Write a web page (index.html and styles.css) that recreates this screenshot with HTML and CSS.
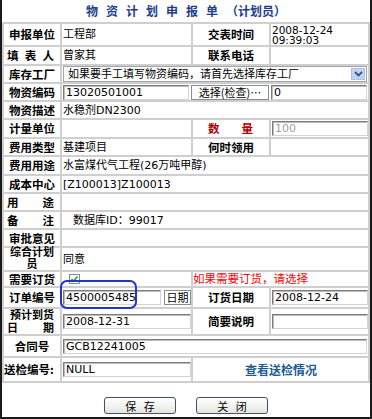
FILE: index.html
```html
<!DOCTYPE html>
<html lang="zh-CN">
<head>
  <meta charset="UTF-8">
  <title>物资计划申报单（计划员）</title>
  <link rel="stylesheet" href="styles.css">
</head>
<body>

<div class="sheet">
  <div class="sheet-title"><span class="title-main">物资计划申报单</span>（计划员）</div>

  <div class="form-grid">
    <!-- 申报单位 -->
    <div class="lbl">申报单位</div>
    <div class="val">工程部</div>
    <div class="lbl">交表时间</div>
    <div class="val stamp">2008-12-24<br>09:39:03</div>

    <!-- 填表人 -->
    <div class="lbl spread"><span>填</span><span>表</span><span>人</span></div>
    <div class="val">曾家其</div>
    <div class="lbl">联系电话</div>
    <div class="val"></div>

    <!-- 库存工厂 -->
    <div class="lbl">库存工厂</div>
    <div class="val span3">
      <div class="select-box">
        <span class="select-text">如果要手工填写物资编码，请首先选择库存工厂</span>
        <span class="select-arrow">
          <svg width="9" height="6" viewBox="0 0 9 6"><path d="M1 1 L4.5 4.5 L8 1" fill="none" stroke="#3d5280" stroke-width="1.8"/></svg>
        </span>
      </div>
    </div>

    <!-- 物资编码 -->
    <div class="lbl">物资编码</div>
    <div class="val span3">
      <input class="text-input w-code" value="13020501001">
      <button class="pick-btn">选择(检查)…</button>
      <input class="text-input w-side" value="0">
    </div>

    <div class="lbl">物资描述</div>
    <div class="val span3">水稳剂DN2300</div>

    <div class="lbl">计量单位</div>
    <div class="val"></div>
    <div class="lbl spread red-label"><span>数</span><span>量</span></div>
    <div class="val"><input class="text-input w-side dim" value="100"></div>

    <div class="lbl">费用类型</div>
    <div class="val">基建项目</div>
    <div class="lbl">何时领用</div>
    <div class="val"></div>

    <div class="lbl">费用用途</div>
    <div class="val span3">水富煤代气工程(26万吨甲醇)</div>

    <div class="lbl">成本中心</div>
    <div class="val span3">[Z100013]Z100013</div>

    <div class="lbl spread"><span>用</span><span>途</span></div>
    <div class="val span3"></div>

    <div class="lbl spread"><span>备</span><span>注</span></div>
    <div class="val span3 note">数据库ID：99017</div>

    <div class="lbl">审批意见</div>
    <div class="val span3"></div>

    <div class="lbl stack tight"><span>综合计划</span><span>员</span></div>
    <div class="val span3">同意</div>

    <!-- 需要订货 -->
    <div class="lbl">需要订货</div>
    <div class="val">
      <svg class="check" width="11" height="10" viewBox="0 0 11 10"><rect x="0.5" y="0.5" width="10" height="9" fill="#fff" stroke="#7d8b9c"/><path d="M2.5 5 L4.5 7 L8.5 2.5" fill="none" stroke="#2aa52a" stroke-width="1.6"/></svg>
    </div>
    <div class="val span2 hint">如果需要订货，请选择</div>

    <!-- 订单编号 -->
    <div class="lbl">订单编号</div>
    <div class="val">
      <input class="text-input w-order" value="4500005485">
      <button class="pick-btn w-date-btn">日期</button>
    </div>
    <div class="lbl">订货日期</div>
    <div class="val"><input class="text-input w-side" value="2008-12-24"></div>

    <div class="lbl stack">
      <span>预计到货</span>
      <span class="spread-line"><span>日</span><span>期</span></span>
    </div>
    <div class="val"><input class="text-input w-arrive" value="2008-12-31"></div>
    <div class="lbl">简要说明</div>
    <div class="val"><input class="text-input w-side" value=""></div>

    <div class="lbl">合同号</div>
    <div class="val span3"><input class="text-input w-full" value="GCB12241005"></div>

    <!-- 送检 -->
    <div class="lbl left-label">送检编号:</div>
    <div class="val"><input class="text-input w-arrive" value="NULL"></div>
    <div class="val span2 link-cell"><a href="#" class="check-link">查看送检情况</a></div>
  </div>

  <div class="actions">
    <button class="action-btn">保&nbsp;&nbsp;&nbsp;存</button>
    <button class="action-btn">关&nbsp;&nbsp;&nbsp;闭</button>
  </div>

  <!-- highlight drawn over the order number -->
  <div class="mark"></div>
</div>

</body>
</html>
```

FILE: styles.css
```css
body {
  margin: 0;
  background: #fff;
  color: #000;
  font-family: "DejaVu Sans", "Noto Sans CJK SC", sans-serif;
  font-size: 11px;
}

.sheet {
  position: relative;
  width: 372px;
  height: 419px;
  box-sizing: border-box;
  border: 2px solid #1a1a1a;
  border-top: 0;
}

.sheet-title {
  height: 22px;
  line-height: 21px;
  text-align: center;
  font-family: "Noto Sans CJK SC", sans-serif;
  font-size: 12px;
  font-weight: bold;
  color: #1d3d8c;
}

.title-main {
  letter-spacing: 8px;
}

/* main grid: gray gaps act as the cell lines */
.form-grid {
  display: grid;
  grid-template-columns: 56px 129px 76px 97px;
  grid-template-rows: 21px 17px 16px 16px 16px 17px 16px 17px 16px 16px 16px 16px 22px 14px 19px 25px 20px 23px;
  gap: 2px;
  padding: 2px;
  background: #cfcfcf;
}

.lbl,
.val {
  background: #fff;
  display: flex;
  align-items: center;
  white-space: nowrap;
}

.val {
  overflow: hidden;
  padding-left: 1px;
  gap: 2px;
  line-height: 13px;
}

.lbl {
  justify-content: center;
  font-family: "Noto Sans CJK SC", sans-serif;
  font-size: 11.5px;
  font-weight: bold;
  line-height: 13px;
}

.span3 { grid-column: span 3; }
.span2 { grid-column: span 2; }

.lbl.spread {
  justify-content: space-between;
  padding: 0 6px 0 3px;
}

.lbl.red-label {
  color: #b30000;
  padding: 0 16px 0 15px;
}

/* two-line labels */
.lbl.stack {
  flex-direction: column;
  align-items: stretch;
  justify-content: center;
  text-align: center;
  font-family: "DejaVu Sans", "Noto Sans CJK SC", sans-serif;
  font-size: 11px;
  line-height: 13px;
}

.lbl.stack.tight {
  line-height: 12px;
}

.spread-line {
  display: flex;
  justify-content: space-between;
  padding: 0 6px 0 3px;
}

.lbl.left-label {
  justify-content: flex-start;
  padding-left: 0;
}

.stamp {
  font-size: 10.5px;
  line-height: 10px;
}

.note {
  padding-left: 11px;
}

.hint {
  color: #ff0000;
  font-size: 11.5px;
  padding-left: 0;
}

.check {
  display: block;
  margin-left: 6px;
}

/* select drawn as a box */
.select-box {
  display: flex;
  align-items: center;
  width: 304px;
  height: 16px;
  box-sizing: border-box;
  border: 1px solid #a0a6ad;
}

.select-text {
  flex: 1;
  padding-left: 4px;
}

.select-arrow {
  display: flex;
  align-items: center;
  justify-content: center;
  width: 14px;
  height: 12px;
  margin-right: 1px;
  background: #c3d2f2;
  border: 1px solid #aebfe6;
  box-sizing: border-box;
}

.text-input {
  display: block;
  height: 15px;
  box-sizing: border-box;
  margin: 0;
  padding: 0 2px;
  border: 1px solid;
  border-color: #7b7b7b #d4d4d4 #d4d4d4 #7b7b7b;
  box-shadow: inset 1px 1px 0 #bdbdbd;
  font-family: "DejaVu Sans", sans-serif;
  font-size: 11px;
  color: #000;
  background: #fff;
  outline: none;
}

.text-input.dim { color: #a0a0a0; }

.w-code { width: 126px; }
.w-side { width: 96px; }
.w-order { width: 98px; }
.w-arrive { width: 128px; }
.w-full { width: 304px; }

.pick-btn {
  height: 15px;
  width: 78px;
  margin: 0;
  padding: 0;
  border: 1px solid #8c8c8c;
  background: #fff;
  font-family: "Noto Sans CJK SC", sans-serif;
  font-size: 11px;
  line-height: 13px;
  color: #000;
}

.w-date-btn {
  width: 27px;
  margin-left: 1px;
}

.link-cell {
  justify-content: center;
}

.check-link {
  font-family: "Noto Sans CJK SC", sans-serif;
  font-size: 12px;
  font-weight: bold;
  color: #1c5a92;
  text-decoration: none;
}

/* buttons under the grid */
.actions {
  display: flex;
  justify-content: center;
  gap: 20px;
  padding-top: 14px;
}

.action-btn {
  width: 72px;
  height: 17px;
  padding: 0;
  border: 1px solid #3f5166;
  border-radius: 3px;
  background: linear-gradient(#ffffff, #e6e6e0);
  font-family: "Noto Sans CJK SC", sans-serif;
  font-size: 11px;
  line-height: 14px;
  color: #000;
}

.mark {
  position: absolute;
  left: 58px;
  top: 280px;
  width: 73px;
  height: 25px;
  border: 2px solid #2433c8;
  border-radius: 7px;
}
```
